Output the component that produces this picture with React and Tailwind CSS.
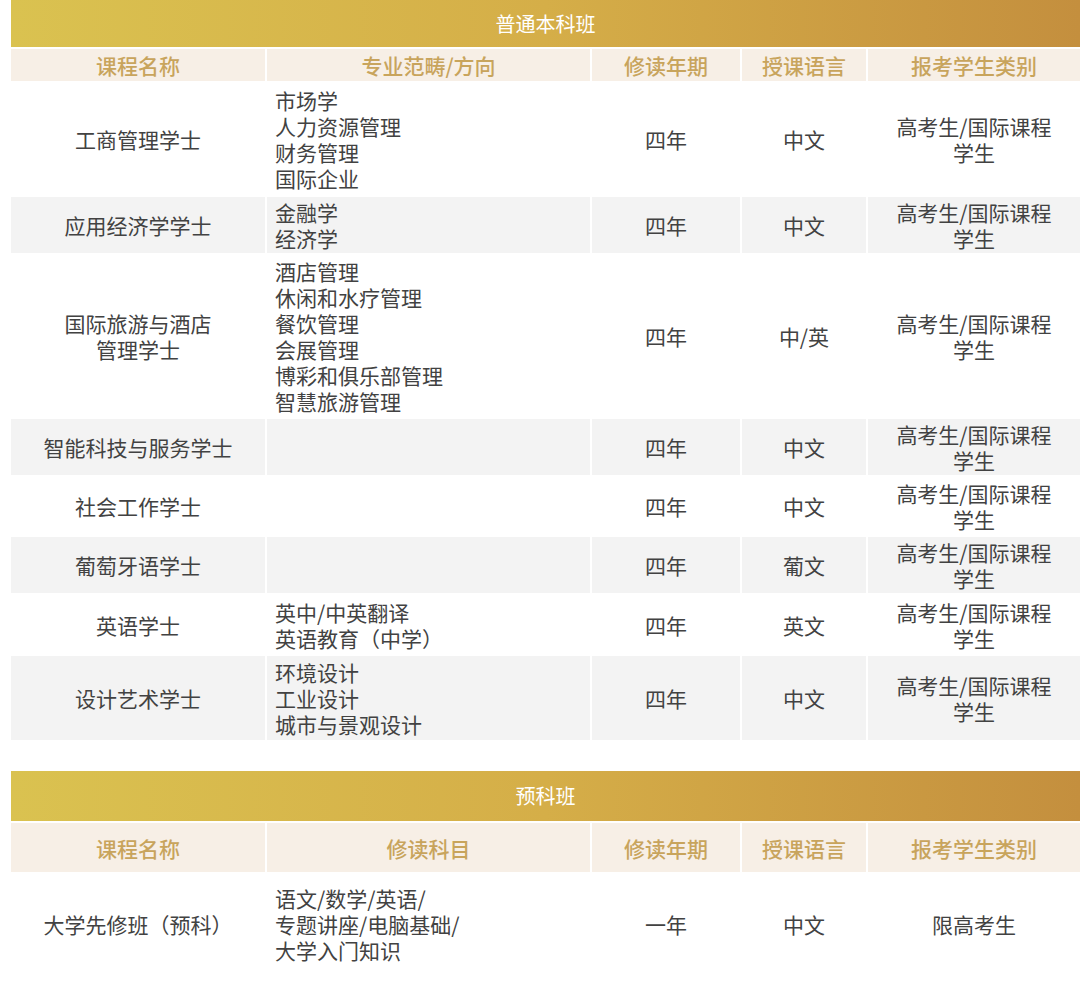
import React from 'react';

const UNDERGRAD = [
  { h: 'h-[112px]', name: ['工商管理学士'], majors: ['市场学', '人力资源管理', '财务管理', '国际企业'], years: '四年', lang: '中文', who: ['高考生/国际课程', '学生'] },
  { h: 'h-[56px]', name: ['应用经济学学士'], majors: ['金融学', '经济学'], years: '四年', lang: '中文', who: ['高考生/国际课程', '学生'] },
  { h: 'h-[162px]', name: ['国际旅游与酒店', '管理学士'], majors: ['酒店管理', '休闲和水疗管理', '餐饮管理', '会展管理', '博彩和俱乐部管理', '智慧旅游管理'], years: '四年', lang: '中/英', who: ['高考生/国际课程', '学生'] },
  { h: 'h-[56px]', name: ['智能科技与服务学士'], majors: [], years: '四年', lang: '中文', who: ['高考生/国际课程', '学生'] },
  { h: 'h-[58px]', name: ['社会工作学士'], majors: [], years: '四年', lang: '中文', who: ['高考生/国际课程', '学生'] },
  { h: 'h-[56px]', name: ['葡萄牙语学士'], majors: [], years: '四年', lang: '葡文', who: ['高考生/国际课程', '学生'] },
  { h: 'h-[59px]', name: ['英语学士'], majors: ['英中/中英翻译', '英语教育（中学）'], years: '四年', lang: '英文', who: ['高考生/国际课程', '学生'] },
  { h: 'h-[84px]', name: ['设计艺术学士'], majors: ['环境设计', '工业设计', '城市与景观设计'], years: '四年', lang: '中文', who: ['高考生/国际课程', '学生'] },
];

const PREP = [
  { h: 'h-[100px]', name: ['大学先修班（预科）'], majors: ['语文/数学/英语/', '专题讲座/电脑基础/', '大学入门知识'], years: '一年', lang: '中文', who: ['限高考生'] },
];

const GRID = 'grid grid-cols-[254px_323px_148px_124px_1fr] gap-x-[2px]';

function Lines({ items }) {
  return items.map((t, i) => <div key={i}>{t}</div>);
}

function Section({ title, col2, rows, bandH, headH }) {
  const heads = ['课程名称', col2, '修读年期', '授课语言', '报考学生类别'];
  return (
    <div>
      <div className={`${bandH} flex items-center justify-center bg-gradient-to-r from-[#dac250] via-[#d5ae48] to-[#c48f3e] text-white text-[20px]`}>
        {title}
      </div>
      <div className={`${GRID} mt-[2px]`}>
        {heads.map((h) => (
          <div key={h} className={`${headH} bg-[#f7efe6] flex items-center justify-center text-[#c8a45c] text-[21px] font-medium`}>
            {h}
          </div>
        ))}
      </div>
      <div className="flex flex-col gap-y-[2px] mt-[2px]">
        {rows.map((r, i) => {
          const bg = i % 2 === 1 ? 'bg-[#f3f3f3]' : 'bg-white';
          return (
            <div key={i} className={`${GRID} ${r.h}`}>
              <div className={`${bg} flex flex-col items-center justify-center text-center`}>
                <Lines items={r.name} />
              </div>
              <div className={`${bg} flex flex-col justify-center pl-[8px]`}>
                <Lines items={r.majors} />
              </div>
              <div className={`${bg} flex items-center justify-center`}>{r.years}</div>
              <div className={`${bg} flex items-center justify-center`}>{r.lang}</div>
              <div className={`${bg} flex flex-col items-center justify-center text-center`}>
                <Lines items={r.who} />
              </div>
            </div>
          );
        })}
      </div>
    </div>
  );
}

export default function App() {
  return (
    <div className="min-h-screen bg-white pl-[11px] text-[#424242] text-[21px] leading-[26px] font-['Noto_Sans_CJK_SC','Noto_Sans',sans-serif] overflow-hidden">
      <Section title="普通本科班" col2="专业范畴/方向" rows={UNDERGRAD} bandH="h-[47px]" headH="h-[32px]" />
      <div className="h-[31px]" />
      <Section title="预科班" col2="修读科目" rows={PREP} bandH="h-[50px]" headH="h-[49px]" />
    </div>
  );
}
